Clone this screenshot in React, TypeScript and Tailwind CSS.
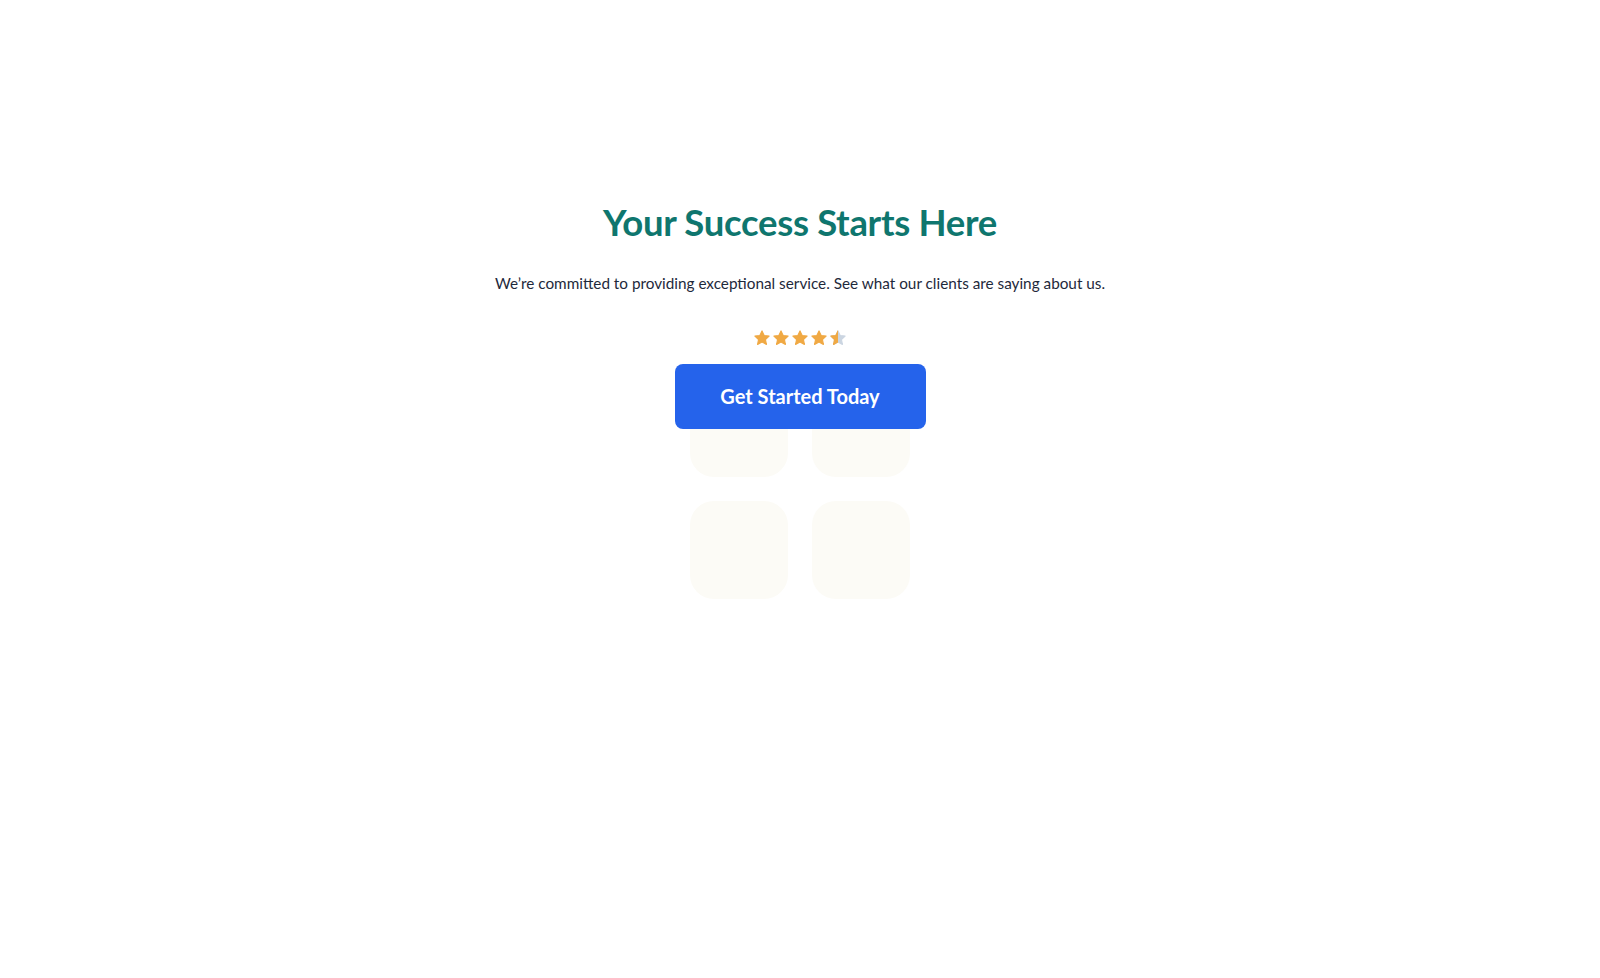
const STAR = "M12 2.5l2.9 6.1 6.6.8-4.9 4.6 1.3 6.6L12 17.3l-5.9 3.3 1.3-6.6-4.9-4.6 6.6-.8z";

function Stars() {
  return (
    <div className="flex items-center gap-[1px]">
      {[0, 1, 2, 3].map((i) => (
        <svg key={i} width="18" height="18" viewBox="0 0 24 24">
          <path d={STAR} fill="#f0a944" stroke="#f0a944" strokeWidth="1.5" strokeLinejoin="round" />
        </svg>
      ))}
      <svg width="18" height="18" viewBox="0 0 24 24">
        <defs>
          <clipPath id="half">
            <rect x="0" y="0" width="12" height="24" />
          </clipPath>
        </defs>
        <path d={STAR} fill="#cbd5e1" stroke="#cbd5e1" strokeWidth="1.5" strokeLinejoin="round" />
        <path d={STAR} fill="#f0a944" stroke="#f0a944" strokeWidth="1.5" strokeLinejoin="round" clipPath="url(#half)" />
      </svg>
    </div>
  );
}

export default function App() {
  return (
    <div className="min-h-screen bg-white font-['Lato',sans-serif]">
      <section className="flex flex-col items-center pt-[196px]">
        {/* Heading */}
        <h1 className="text-[36.5px] font-bold leading-[52px] text-[#0f766e] tracking-[-0.3px]">
          Your Success Starts Here
        </h1>

        <p className="mt-[24px] text-[15.3px] text-[#1e293b]">
          We’re committed to providing exceptional service. See what our clients are saying about us.
        </p>

        <div className="mt-[34px]">
          <Stars />
        </div>

        <button className="relative z-10 mt-[17px] h-[65px] w-[251px] rounded-lg bg-[#2563eb] text-[20px] font-bold text-white">
          Get Started Today
        </button>

        {/* Faded cards behind */}
        <div className="-mt-[50px] grid grid-cols-2 gap-6">
          <div className="h-[98px] w-[98px] rounded-3xl bg-[#fcfbf6]" />
          <div className="h-[98px] w-[98px] rounded-3xl bg-[#fcfbf6]" />
          <div className="h-[98px] w-[98px] rounded-3xl bg-[#fcfbf6]" />
          <div className="h-[98px] w-[98px] rounded-3xl bg-[#fcfbf6]" />
        </div>
      </section>
    </div>
  );
}
